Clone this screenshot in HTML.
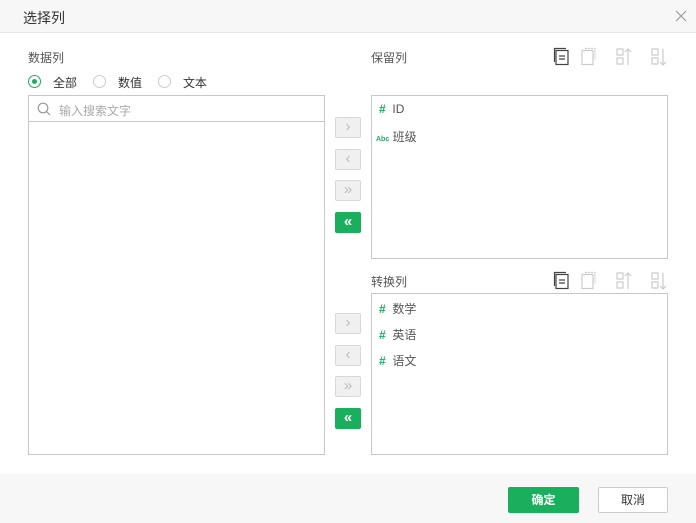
<!DOCTYPE html>
<html><head><meta charset="utf-8"><style>
*{box-sizing:border-box;margin:0;padding:0}
body{width:696px;height:523px;background:#fff;font-family:"Liberation Sans","Noto Sans CJK SC",sans-serif;font-size:12px;color:#333;position:relative;overflow:hidden}
.a{position:absolute}
.hdr{left:0;top:0;width:696px;height:33px;background:#f7f7f7;border-bottom:1px solid #e6e6e6}
.box{border:1px solid #c8c8c8;background:#fff}
.btn{width:26px;height:21px;border:1px solid #d8d8d8;background:#f0f0f0;border-radius:2px;color:#bbb;font-size:15px;text-align:center;line-height:18px}
.btn.g{background:#1aaf5d;border-color:#1aaf5d;color:#fff;font-weight:bold}
.radio{width:13px;height:13px;border:1px solid #ccc;border-radius:50%}
.radio.on{border-color:#1aaf5d}
.radio.on:after{content:"";position:absolute;left:3px;top:3px;width:5px;height:5px;border-radius:50%;background:#1aaf5d}
.hash{color:#1aaf5d;font-weight:bold;font-size:12px}
.it{left:7px;font-size:12px;color:#555}
</style></head><body>
<div class="a hdr"></div>
<div class="a" style="left:23px;top:8px;font-size:14px;color:#333">选择列</div>
<svg class="a" style="left:675px;top:10px" width="12" height="12"><path d="M1 1L11 11M11 1L1 11" stroke="#999" stroke-width="1.1"/></svg>

<div class="a" style="left:28px;top:49px;color:#555">数据列</div>
<div class="a radio on" style="left:28px;top:75px"></div>
<div class="a" style="left:53px;top:74px">全部</div>
<div class="a radio" style="left:93px;top:75px"></div>
<div class="a" style="left:118px;top:74px">数值</div>
<div class="a radio" style="left:158px;top:75px"></div>
<div class="a" style="left:183px;top:74px">文本</div>

<div class="a box" style="left:28px;top:95px;width:297px;height:360px"></div>
<div class="a" style="left:29px;top:121px;width:295px;height:1px;background:#c8c8c8"></div>
<svg class="a" style="left:37px;top:102px" width="14" height="14"><circle cx="6" cy="6" r="4.8" fill="none" stroke="#999" stroke-width="1.2"/><path d="M9.5 9.5L13 13" stroke="#999" stroke-width="1.2"/></svg>
<div class="a" style="left:59px;top:102px;color:#aaa">输入搜索文字</div>

<div class="a btn" style="left:335px;top:117px">›</div>
<div class="a btn" style="left:335px;top:149px">‹</div>
<div class="a btn" style="left:335px;top:180px">»</div>
<div class="a btn g" style="left:335px;top:212px">«</div>
<div class="a btn" style="left:335px;top:313px">›</div>
<div class="a btn" style="left:335px;top:345px">‹</div>
<div class="a btn" style="left:335px;top:376px">»</div>
<div class="a btn g" style="left:335px;top:408px">«</div>

<div class="a" style="left:371px;top:49px;color:#555">保留列</div>
<div class="a" style="left:371px;top:273px;color:#555">转换列</div>

<div class="a box" style="left:371px;top:95px;width:297px;height:164px">
 <div class="a it" style="top:6px"><span class="hash">#</span>&nbsp; ID</div>
 <div class="a it" style="left:4px;top:32px"><span style="color:#1aaf5d;font-size:7px;font-weight:bold">Abc</span> 班级</div>
</div>
<div class="a box" style="left:371px;top:293px;width:297px;height:162px">
 <div class="a it" style="top:6px"><span class="hash">#</span>&nbsp; 数学</div>
 <div class="a it" style="top:32px"><span class="hash">#</span>&nbsp; 英语</div>
 <div class="a it" style="top:58px"><span class="hash">#</span>&nbsp; 语文</div>
</div>

<svg class="a" style="left:553px;top:47px" width="120" height="20">
 <g fill="none" stroke-width="1.2">
 <rect x="3" y="3.5" width="12" height="14" stroke="#444"/><path d="M1.5 15V1.5H13" stroke="#444"/><path d="M6 9H12M6 12H12" stroke="#444"/>
 <rect x="29" y="3.5" width="11" height="14" stroke="#ccc"/><path d="M32 1.5H42V13" stroke="#ccc" stroke-dasharray="2 1"/>
 <path d="M64 2h6v6h-6zM64 11h6v6h-6z" stroke="#ccc"/><path d="M75 2V18M72 5L75 2L78 5" stroke="#ccc"/>
 <path d="M99 2h6v6h-6zM99 11h6v6h-6z" stroke="#ccc"/><path d="M110 2V18M107 15L110 18L113 15" stroke="#ccc"/>
 </g></svg>
<svg class="a" style="left:553px;top:271px" width="120" height="20">
 <g fill="none" stroke-width="1.2">
 <rect x="3" y="3.5" width="12" height="14" stroke="#444"/><path d="M1.5 15V1.5H13" stroke="#444"/><path d="M6 9H12M6 12H12" stroke="#444"/>
 <rect x="29" y="3.5" width="11" height="14" stroke="#ccc"/><path d="M32 1.5H42V13" stroke="#ccc" stroke-dasharray="2 1"/>
 <path d="M64 2h6v6h-6zM64 11h6v6h-6z" stroke="#ccc"/><path d="M75 2V18M72 5L75 2L78 5" stroke="#ccc"/>
 <path d="M99 2h6v6h-6zM99 11h6v6h-6z" stroke="#ccc"/><path d="M110 2V18M107 15L110 18L113 15" stroke="#ccc"/>
 </g></svg>

<div class="a" style="left:0;top:474px;width:696px;height:49px;background:#f7f7f7"></div>
<div class="a" style="left:508px;top:487px;width:71px;height:26px;background:#1aaf5d;border-radius:2px;color:#fff;text-align:center;line-height:26px;font-weight:bold">确定</div>
<div class="a" style="left:598px;top:487px;width:70px;height:26px;background:#fff;border:1px solid #ccc;border-radius:2px;color:#333;text-align:center;line-height:24px">取消</div>
</body></html>
